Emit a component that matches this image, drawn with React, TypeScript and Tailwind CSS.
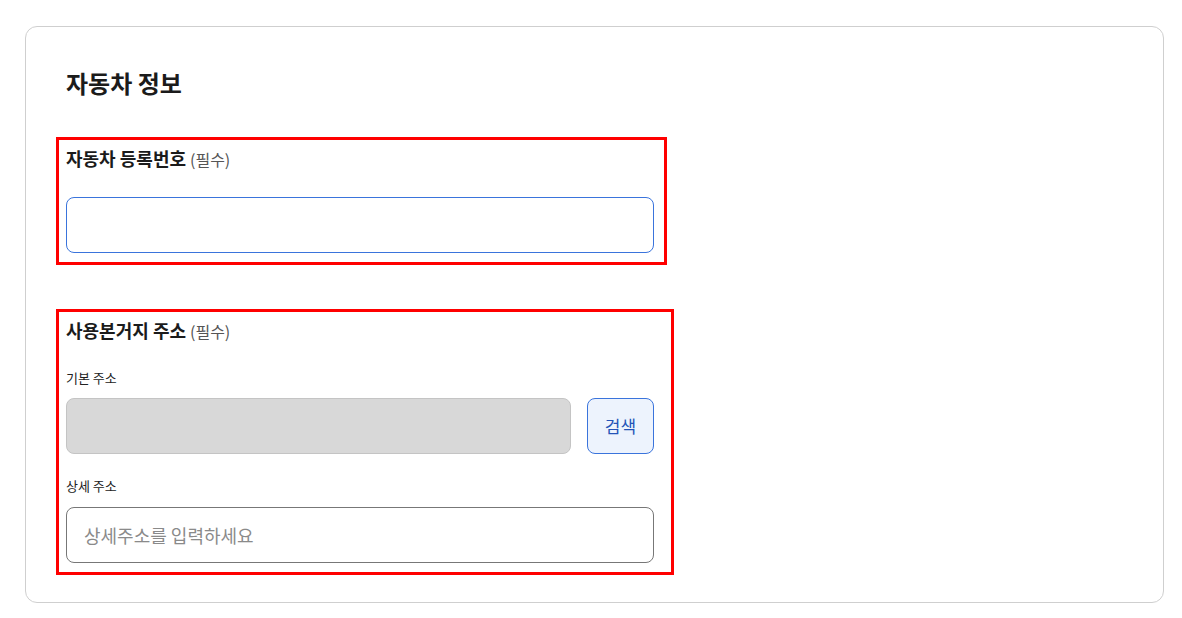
import { useState } from "react";

const font = { fontFamily: '"Noto Sans CJK KR", "Noto Sans", sans-serif' };

const FieldLabel = ({ title }: { title: string }) => (
	<div className="h-[26px] leading-[26px] flex items-baseline gap-[4px]">
		<span className="text-[18px] font-bold text-[#1b1b1b]">{title}</span>
		<span className="text-[16px] text-[#555]">(필수)</span>
	</div>
);

export default function App() {
	const [plate, setPlate] = useState("");
	const [detail, setDetail] = useState("");

	return (
		<div className="min-h-screen bg-white pt-[26px] pl-[25px]" style={font}>
			<div className="w-[1139px] h-[577px] rounded-[12px] border border-[#cfcfcf] pl-[30px] pt-[34px]">
				<h2 className="ml-[10px] h-[44px] leading-[44px] text-[24px] font-bold text-[#1b1b1b]">
					자동차 정보
				</h2>

				<section className="mt-[32px] w-[611px] border-[3px] border-[#ff0000] pl-[7px] pr-[10px] pt-[5px] pb-[9px]">
					<FieldLabel title="자동차 등록번호" />
					<input
						value={plate}
						onChange={(e) => setPlate(e.target.value)}
						className="mt-[26px] block w-[588px] h-[56px] rounded-[8px] border border-[#3a74dc] bg-white px-[17px] text-[17px] outline-none"
					/>
				</section>

				<section className="mt-[44px] w-[618px] border-[3px] border-[#ff0000] pl-[7px] pr-[17px] pt-[5px] pb-[9px]">
					<FieldLabel title="사용본거지 주소" />

					<div className="mt-[25px] h-[20px] leading-[20px] text-[13px] text-[#222]">기본 주소</div>
					<div className="mt-[10px] flex gap-[16px]">
						<input
							disabled
							className="block w-[505px] h-[56px] rounded-[8px] border border-[#c4c4c4] bg-[#d8d8d8]"
						/>
						<button className="w-[67px] h-[56px] rounded-[8px] border border-[#3a74dc] bg-[#edf3fd] text-[17px] text-[#2453b8]">
							검색
						</button>
					</div>

					<div className="mt-[22px] h-[20px] leading-[20px] text-[13px] text-[#222]">상세 주소</div>
					<input
						value={detail}
						onChange={(e) => setDetail(e.target.value)}
						placeholder="상세주소를 입력하세요"
						className="mt-[11px] block w-[588px] h-[56px] rounded-[8px] border border-[#777] bg-white px-[17px] text-[18px] text-[#222] placeholder:text-[#8a8a8a] outline-none"
					/>
				</section>
			</div>
		</div>
	);
}
